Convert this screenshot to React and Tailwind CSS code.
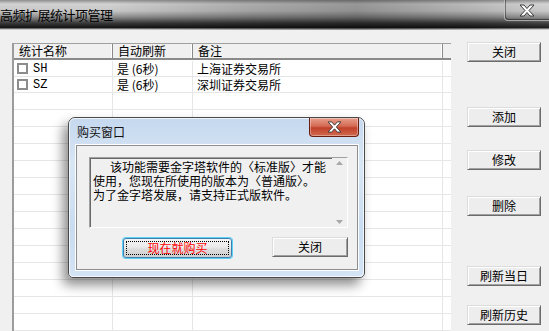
import React from "react";

function Btn({ children, className = "" }) {
  return (
    <div
      className={
        "flex items-center justify-center h-[20px] w-[74px] bg-[#ededed] border border-t-[#dcdcdc] border-l-[#dcdcdc] border-r-[#6b6b6b] border-b-[#6b6b6b] shadow-[inset_1px_1px_0_#ffffff,inset_-1px_-1px_0_#a0a0a0] text-[12px] leading-none text-black " +
        className
      }
    >
      {children}
    </div>
  );
}

function XGlyph({ w = 16, h = 13 }) {
  return (
    <svg width={w} height={h} viewBox="0 0 16 13">
      <path
        d="M1 1 L5 1 L8 4.5 L11 1 L15 1 L10 6.5 L15 12 L11 12 L8 8.5 L5 12 L1 12 L6 6.5 Z"
        fill="#ffffff"
        stroke="#3a3a3a"
        strokeWidth="1"
        strokeLinejoin="round"
      />
    </svg>
  );
}

const rows = [
  { name: "SH", auto: "是 (6秒)", note: "上海证券交易所" },
  { name: "SZ", auto: "是 (6秒)", note: "深圳证券交易所" },
];

export default function App() {
  const empty = Array.from({ length: 14 });
  return (
    <div className="w-[549px] h-[331px] relative overflow-hidden bg-[#f0f0f0] font-['Noto_Sans_CJK_SC',sans-serif] text-black">
      {/* title bar */}
      <div className="relative h-[30px] bg-[linear-gradient(180deg,#8e8e8e_0px,#d2d2d2_4px,#c6c6c6_11px,#8c8c8c_17px,#3a3a3a_23px,#111111_28px,#c8c8c8_29px)]">
        <div className="absolute inset-0 bg-[linear-gradient(90deg,rgba(0,0,0,0)_0%,rgba(0,0,0,0)_20%,rgba(0,0,0,0.18)_45%,rgba(0,0,0,0.28)_65%,rgba(0,0,0,0.12)_85%,rgba(255,255,255,0.05)_100%)]" />
        <div className="relative flex items-center h-[29px] text-[13px] leading-none tracking-[-0.5px] pb-[1px]">
          高频扩展统计项管理
        </div>
        <div className="absolute right-0 top-0 w-[45px] h-[21px] border-l border-b border-[#c8c8c8]/70 rounded-bl-[4px] flex items-center justify-center shadow-[inset_1px_-1px_0_rgba(0,0,0,0.4)]">
          <XGlyph />
        </div>
      </div>

      {/* body */}
      <div className="flex h-[301px]">
        {/* list */}
        <div className="ml-[12px] mt-[13px] w-[439px] bg-white border-l-2 border-[#9c9c9c] flex flex-col text-[12px]">
          <div className="flex h-[18px] bg-[#f0f0f0] border-t border-b-2 border-t-[#a0a0a0] border-b-[#8a8a8a] leading-none">
            <div className="w-[99px] flex items-center pl-[5px] border-r border-[#8a8a8a] shadow-[inset_-1px_0_0_#ffffff]">统计名称</div>
            <div className="w-[80px] flex items-center pl-[5px] border-r border-[#8a8a8a] shadow-[inset_-1px_0_0_#ffffff]">自动刷新</div>
            <div className="w-[250px] flex items-center pl-[5px] border-r border-[#8a8a8a] shadow-[inset_-1px_0_0_#ffffff]">备注</div>
            <div className="flex-1" />
          </div>
          <div className="h-[1px]" />
          {rows.map((r) => (
            <div key={r.name} className="flex h-[17px] border-b border-[#e6e6e6] leading-none">
              <div className="w-[99px] flex items-center pl-[3px] border-r border-[#e6e6e6]">
                <div className="w-[11px] h-[11px] border-2 border-[#8c8c8c] bg-white" />
                <span className="ml-[5px] font-['Liberation_Mono',monospace] text-[12px]">{r.name}</span>
              </div>
              <div className="w-[80px] flex items-center pl-[4px] border-r border-[#e6e6e6] whitespace-pre">{r.auto}</div>
              <div className="w-[250px] flex items-center pl-[4px] border-r border-[#e6e6e6]">{r.note}</div>
              <div className="flex-1" />
            </div>
          ))}
          {empty.map((_, i) => (
            <div key={i} className="flex h-[17px] shrink-0 border-b border-[#e6e6e6]">
              <div className="w-[99px] border-r border-[#e6e6e6]" />
              <div className="w-[80px] border-r border-[#e6e6e6]" />
              <div className="w-[250px] border-r border-[#e6e6e6]" />
              <div className="flex-1" />
            </div>
          ))}
        </div>

        {/* buttons */}
        <div className="flex flex-col pl-[16px]">
          <Btn className="mt-[12px]">关闭</Btn>
          <Btn className="mt-[45px]">添加</Btn>
          <Btn className="mt-[23px]">修改</Btn>
          <Btn className="mt-[26px]">删除</Btn>
          <Btn className="mt-[50px]">刷新当日</Btn>
          <Btn className="mt-[19px]">刷新历史</Btn>
        </div>
      </div>

      {/* dialog */}
      <div className="absolute left-[68px] top-[117px] w-[297px] h-[161px] rounded-t-[7px] rounded-b-[5px] border border-[#4a4a4a] bg-[linear-gradient(180deg,#c5d8ee_0%,#d9e7f5_30%,#c9dcf0_70%,#d4e4f5_100%)] shadow-[-5px_7px_12px_rgba(0,0,0,0.45)]">
        <div className="absolute inset-0 rounded-t-[6px] rounded-b-[4px] border border-white/70 pointer-events-none" />
        <div className="relative h-[27px] flex items-center pl-[8px] text-[12px] leading-none text-[#111]">
          购买窗口
        </div>
        <div className="absolute right-[5px] top-0 w-[50px] h-[19px] rounded-b-[4px] border border-t-0 border-[#6b1d12] bg-[linear-gradient(180deg,#e8a08e_0%,#d46a53_45%,#c2412a_55%,#cf6a4f_100%)] flex items-center justify-center shadow-[inset_0_0_0_1px_rgba(255,255,255,0.35)]">
          <XGlyph w={15} h={12} />
        </div>
        <div className="absolute left-[7px] right-[6px] top-[27px] bottom-[7px] bg-[#f0f0f0] border border-[#8b8f94] shadow-[0_0_0_1px_#ffffff]">
          <div className="ml-[12px] mt-[11px] w-[259px] h-[71px] flex border border-t-[#a0a0a0] border-l-[#a0a0a0] border-r-white border-b-white shadow-[inset_1px_1px_0_#696969]">
            <div className="flex-1 pl-[3px] pt-[2px] text-[12px] leading-[14px] text-black">
              <div className="pl-[17px]">该功能需要金字塔软件的〈标准版〉才能</div>
              <div>使用，您现在所使用的版本为〈普通版〉。</div>
              <div>为了金字塔发展，请支持正式版软件。</div>
            </div>
            <div className="w-[15px] flex flex-col justify-between items-center py-[3px] bg-[#f0f0f0]">
              <svg width="7" height="4" viewBox="0 0 7 4"><path d="M0 4 L3.5 0 L7 4 Z" fill="#a8a8a8" /></svg>
              <svg width="7" height="4" viewBox="0 0 7 4"><path d="M0 0 L3.5 4 L7 0 Z" fill="#a8a8a8" /></svg>
            </div>
          </div>
          <div className="flex mt-[10px]">
            <div className="ml-[46px] w-[109px] h-[20px] rounded-[3px] border border-[#3c7fb1] shadow-[0_0_0_1px_#5fd0f5] bg-[linear-gradient(180deg,#f4f4f4_0%,#ebebeb_45%,#dddddd_55%,#cfcfcf_100%)] p-[2px]">
              <div className="w-full h-full border border-dotted border-black flex items-center justify-center text-[12px] leading-none text-[#ff0000]">
                现在就购买
              </div>
            </div>
            <Btn className="ml-[40px] w-[76px] -mt-[1px]">关闭</Btn>
          </div>
        </div>
      </div>
    </div>
  );
}
